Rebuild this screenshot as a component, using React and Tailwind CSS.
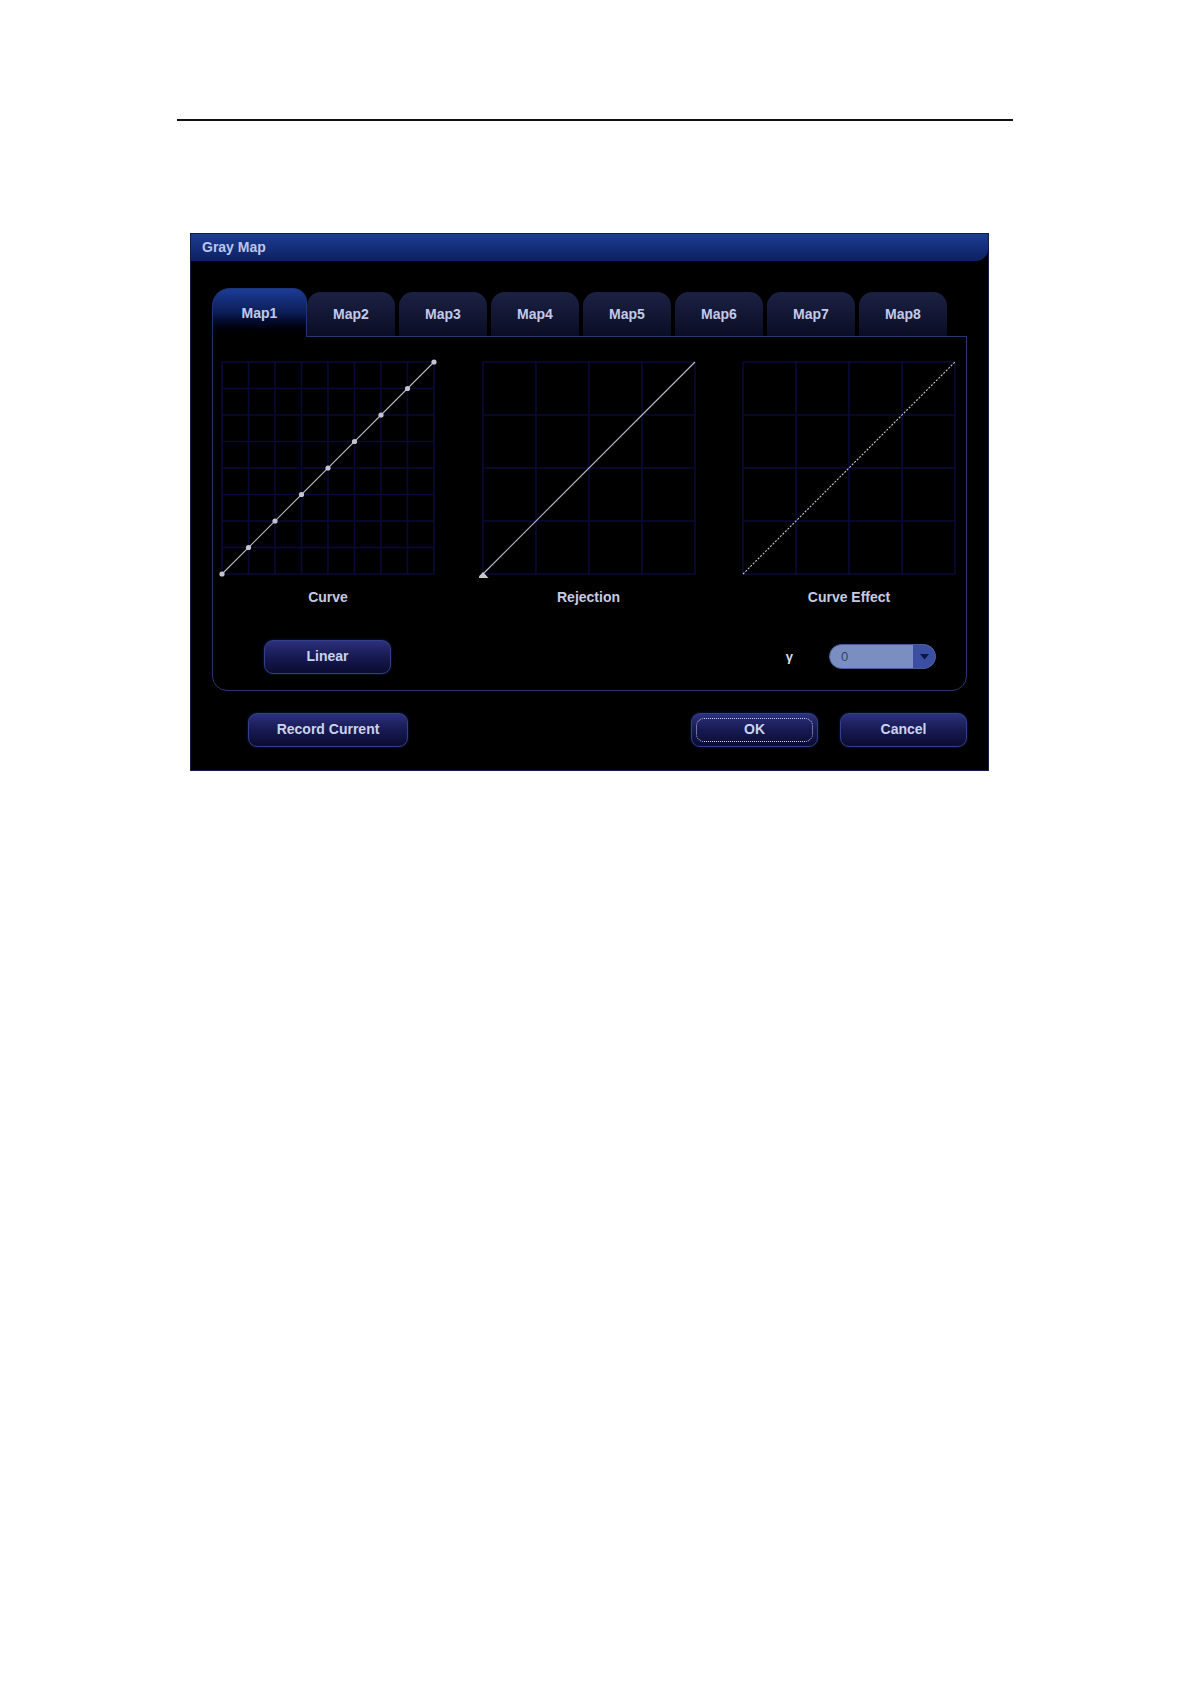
import React from 'react';

const GRID = 212;

// Dark grid shared by the three plots
const Grid = ({ divisions }) => {
    const step = GRID / divisions;
    const lines = [];
    for (let i = 0; i <= divisions; i++) {
        const p = i * step;
        lines.push(<line key={`v${i}`} x1={p} y1={0} x2={p} y2={GRID} stroke="#0a0a38" strokeWidth="1.6" />);
        lines.push(<line key={`h${i}`} x1={0} y1={p} x2={GRID} y2={p} stroke="#0a0a38" strokeWidth="1.6" />);
    }
    return <g>{lines}</g>;
};

const CurvePlot = () => {
    const pts = Array.from({ length: 9 }, (_, i) => i * (GRID / 8));
    return (
        <svg width="220" height="220" viewBox="-4 -4 220 220" className="block">
            <Grid divisions={8} />
            <line x1={0} y1={GRID} x2={GRID} y2={0} stroke="#b9b9c6" strokeWidth="1.1" />
            {pts.map(p => (
                <circle key={p} cx={p} cy={GRID - p} r="2.6" fill="#c4c4d0" />
            ))}
        </svg>
    );
};

const RejectionPlot = () => (
    <svg width="220" height="220" viewBox="-4 -4 220 220" className="block">
        <Grid divisions={4} />
        <line x1={0} y1={GRID} x2={GRID} y2={0} stroke="#bcbccc" strokeWidth="1.1" />
        <polygon points="-5.5,216 5.5,216 0,210" fill="#c8c8d0" />
    </svg>
);

const EffectPlot = () => (
    <svg width="220" height="220" viewBox="-4 -4 220 220" className="block">
        <Grid divisions={4} />
        <line x1={0} y1={GRID} x2={GRID} y2={0} stroke="#c8c8d8" strokeWidth="1.1" strokeDasharray="2 1.5" />
    </svg>
);

const NavyButton = ({ children, width, focused }) => (
    <button
        type="button"
        className={`relative h-[34px] ${width} rounded-[9px] border border-[#333f8e] bg-gradient-to-b from-[#2c317c] via-[#171a52] to-[#0a0c30] text-[14px] font-bold text-[#cdd3ec] shadow-[0_0_3px_rgba(40,60,160,0.5)]`}
    >
        {focused && (
            <span className="absolute inset-[4px] rounded-[8px] border border-dotted border-[#c4ccf0]" />
        )}
        <span className="relative">{children}</span>
    </button>
);

const tabs = ['Map1', 'Map2', 'Map3', 'Map4', 'Map5', 'Map6', 'Map7', 'Map8'];

const plots = [
    { label: 'Curve', Plot: CurvePlot },
    { label: 'Rejection', Plot: RejectionPlot },
    { label: 'Curve Effect', Plot: EffectPlot },
];

export default function App() {
    return (
        <div className="w-[1190px] min-h-[1684px] bg-white pt-[119px] font-['Liberation_Sans',Arial,sans-serif]">
            {/* page header rule */}
            <div className="ml-[177px] h-[1.5px] w-[836px] bg-[#111]" />

            {/* Gray Map dialog */}
            <div className="ml-[190px] mt-[112px] flex h-[538px] w-[799px] flex-col border border-[#131d4a] bg-black">
                <div className="flex h-[27px] items-center rounded-br-[12px] bg-gradient-to-b from-[#1d3d92] to-[#0c2062] pl-[11px] text-[14px] font-bold text-[#bcc6ea]">
                    Gray Map
                </div>

                {/* tabs */}
                <div className="relative z-10 ml-[21px] mt-[27px] flex items-end">
                    {tabs.map((t, i) => i === 0 ? (
                        <div
                            key={t}
                            className="-mb-px flex h-[49px] w-[95px] items-start justify-center rounded-tl-[18px] rounded-tr-[14px] border-x border-t border-[#1f3578] bg-gradient-to-b from-[#1b3c98] via-[#0c1d55] to-black pt-[14px] text-[14px] font-bold text-[#c3cae6]"
                        >
                            {t}
                        </div>
                    ) : (
                        <div
                            key={t}
                            className={`flex h-[44px] w-[88px] items-start justify-center rounded-t-[14px] bg-gradient-to-b from-[#1c2245] to-[#0a0d24] pt-[12px] text-[14px] font-bold text-[#c3cae6] ${i > 1 ? 'ml-[4px]' : ''}`}
                        >
                            {t}
                        </div>
                    ))}
                </div>

                {/* tab panel */}
                <div className="ml-[21px] flex h-[355px] w-[755px] flex-col rounded-b-[15px] border border-[#27386e]">
                    <div className="flex gap-[40.5px] pl-[5px] pt-[21px]">
                        {plots.map(({ label, Plot }) => (
                            <div key={label} className="flex w-[220px] flex-col items-center">
                                <Plot />
                                <div className="mt-[11px] text-[14px] font-bold leading-[16px] text-[#c5cbe2]">{label}</div>
                            </div>
                        ))}
                    </div>

                    <div className="mt-[35px] flex items-center pl-[51px] pr-[30px]">
                        <NavyButton width="w-[127px]">Linear</NavyButton>
                        <div className="flex-1" />
                        <span className="text-[13px] font-bold text-[#d8dcec]">γ</span>
                        <div className="ml-[36px] flex h-[25px] w-[107px] overflow-hidden rounded-full border border-[#4a5c98] bg-[#7a8ec2]">
                            <div className="flex flex-1 items-center pl-[11px] text-[13px] text-[#34446e]">0</div>
                            <div className="flex w-[22px] items-center justify-center bg-[#3a4ea2]">
                                <svg width="9" height="6" viewBox="0 0 9 6">
                                    <polygon points="0,0 9,0 4.5,5.5" fill="#0c1648" />
                                </svg>
                            </div>
                        </div>
                    </div>
                </div>

                {/* dialog actions */}
                <div className="mt-[22px] flex items-center pl-[57px] pr-[21px]">
                    <NavyButton width="w-[160px]">Record Current</NavyButton>
                    <div className="flex-1" />
                    <NavyButton width="w-[127px]" focused>OK</NavyButton>
                    <div className="ml-[22px]">
                        <NavyButton width="w-[127px]">Cancel</NavyButton>
                    </div>
                </div>
            </div>
        </div>
    );
}
